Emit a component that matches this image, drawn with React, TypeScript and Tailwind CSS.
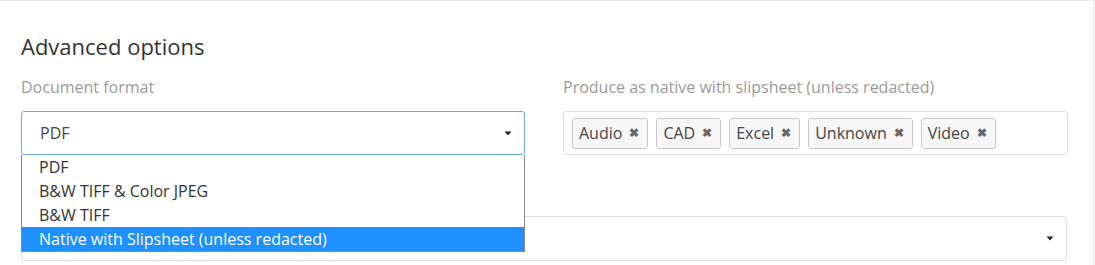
const FORMATS = ["PDF", "B&W TIFF & Color JPEG", "B&W TIFF", "Native with Slipsheet (unless redacted)"];

const NATIVE_TYPES = ["Audio", "CAD", "Excel", "Unknown", "Video"];

function Caret() {
  return (
    <svg width="8" height="5" viewBox="0 0 8 5" className="shrink-0">
      <path d="M0.5 0.5 L7.5 0.5 L4 4.5 Z" fill="#222" />
    </svg>
  );
}

function Tag({ label }: { label: string }) {
  return (
    <span className="flex items-center h-[31px] pl-[6px] pr-[8px] gap-[7px] rounded-[3px] border border-[#c8c8c8] bg-[#f7f7f7] text-[16px] text-[#444]">
      {label}
      <span className="text-[12px] font-bold text-[#666] leading-none">✖</span>
    </span>
  );
}

export default function App() {
  return (
    <div className="w-[1095px] h-[265px] bg-white overflow-hidden" style={{ fontFamily: '"Open Sans", "Noto Sans", sans-serif' }}>
      <div className="relative w-[1094px] h-[300px] border-t border-r border-[#e8e8e8] pl-[21px] pr-[26px] pt-[30px]">
        <h2 className="text-[22px] leading-[30px] text-[#333]">Advanced options</h2>

        <div className="grid grid-cols-[504px_505px] gap-x-[38px] mt-[15px]">
          {/* Document format */}
          <div>
            <div className="text-[16px] leading-[22px] text-[#9a9a9a] mb-[13px]">Document format</div>
            <div className="flex items-center justify-between h-[44px] rounded-[3px] border border-[#6aa6e8] pl-[18px] pr-[12px] text-[16px] text-[#444]">
              PDF
              <Caret />
            </div>
          </div>

          {/* Native with slipsheet */}
          <div>
            <div className="text-[16px] leading-[22px] text-[#9a9a9a] mb-[13px]">
              Produce as native with slipsheet (unless redacted)
            </div>
            <div className="flex items-center gap-[8px] h-[44px] rounded-[3px] border border-[#dedede] pl-[8px]">
              {NATIVE_TYPES.map((t) => (
                <Tag key={t} label={t} />
              ))}
            </div>
          </div>
        </div>

        {/* next row, covered by the open list */}
        <div className="mt-[26px]">
          <div className="h-[22px] mb-[13px]" />
          <div className="flex items-center justify-end h-[45px] rounded-[3px] border border-[#dedede] pr-[12px]">
            <Caret />
          </div>
        </div>

        {/* open dropdown */}
        <ul className="absolute left-[21px] top-[154px] w-[504px] border border-t-0 border-[#8a8a8a] bg-white text-[16px] text-[#333]">
          {FORMATS.map((f, i) => (
            <li
              key={f}
              className={
                i === FORMATS.length - 1
                  ? "h-[24px] leading-[24px] pl-[17px] bg-[#1e90ff] text-white"
                  : "h-[24px] leading-[24px] pl-[17px]"
              }
            >
              {f}
            </li>
          ))}
        </ul>
      </div>
    </div>
  );
}
